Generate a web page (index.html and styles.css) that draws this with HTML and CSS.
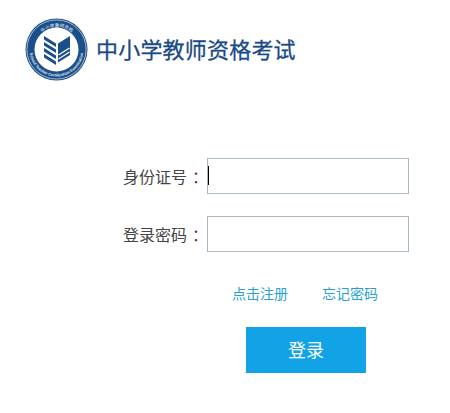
FILE: index.html
```html
<!DOCTYPE html>
<html lang="zh-CN">
<head>
<meta charset="utf-8">
<title>中小学教师资格考试</title>
<link rel="stylesheet" href="styles.css">
</head>
<body>
<header class="brand">
  <svg class="logo" viewBox="0 0 63 63" aria-hidden="true">
    <defs>
      <path id="ring-top" d="M9.5 31.5 A22.5 22.5 0 0 1 54.5 31.5"/>
      <path id="ring-bottom" d="M4.5 31.5 A27 27 0 0 0 58.5 31.5"/>
    </defs>
    <circle cx="31.5" cy="31.5" r="31" fill="#1a4f8a"/>
    <circle cx="31.5" cy="31.5" r="29.6" fill="none" stroke="#dfe8f2" stroke-width="0.7"/>
    <circle cx="31.5" cy="31.5" r="22" fill="#fff"/>
    <text class="ring-cn"><textPath href="#ring-top" startOffset="50%" text-anchor="middle">中小学教师资格</textPath></text>
    <text class="ring-en"><textPath href="#ring-bottom" startOffset="50%" text-anchor="middle">School Teacher Certification Examination</textPath></text>
    <path d="M19 18 L31 25.5 V29 L19 21.5 Z M19 24 L31 31.5 V35 L19 27.5 Z M19 30 L31 37.5 V41 L19 33.5 Z M19 36 L31 43.5 V47 L19 39.5 Z" fill="#1a4f8a"/>
    <path d="M33 25.5 L45 18 V37 L33 44.5 Z" fill="#1a4f8a"/>
    <path d="M33.5 37 L44.5 30 M33.5 41 L44.5 34" stroke="#fff" stroke-width="1.2"/>
  </svg>
  <h1 class="title">中小学教师资格考试</h1>
</header>
<main>
  <form class="login">
    <div class="field">
      <label class="label" for="id">身份证号<span class="colon">：</span></label>
      <div class="control">
        <input class="input" id="id" type="text">
        <span class="caret"></span>
      </div>
    </div>
    <div class="field">
      <label class="label" for="pw">登录密码<span class="colon">：</span></label>
      <div class="control">
        <input class="input" id="pw" type="password">
      </div>
    </div>
    <div class="links">
      <a class="link" href="#">点击注册</a>
      <a class="link" href="#">忘记密码</a>
    </div>
    <button class="submit" type="button">登录</button>
  </form>
</main>
</body>
</html>
```
FILE: styles.css
```css
* { box-sizing: border-box; }
html, body { margin: 0; background: #fff; }
body {
  font-family: "Noto Sans CJK SC", "Liberation Sans", sans-serif;
  color: #333;
}
.brand {
  display: flex;
  align-items: center;
  gap: 9px;
  height: 98px;
  padding-left: 25px;
}
.logo { width: 63px; height: 63px; flex: none; }
.ring-cn { font-size: 4.6px; fill: #e6edf5; }
.ring-en { font-size: 3.9px; fill: #e6edf5; font-family: "Liberation Sans", sans-serif; font-weight: 700; }
.title {
  margin: 0 0 3px -1px;
  font-size: 22px;
  font-weight: 400;
  line-height: 30px;
  letter-spacing: 0.2px;
  color: #1b4a84;
  -webkit-text-stroke: 0.3px #1b4a84;
}
.login {
  display: flex;
  flex-direction: column;
  padding-top: 60px;
}
.field {
  display: flex;
  align-items: center;
  height: 36px;
  margin-bottom: 22px;
  padding-left: 123px;
}
.label {
  width: 84px;
  font-size: 16px;
  line-height: 36px;
  color: #444;
  white-space: nowrap;
}
.colon { padding-left: 5px; }
.control { position: relative; }
.input {
  display: block;
  width: 202px;
  height: 36px;
  padding: 0 0 0 1px;
  border: 1px solid #a9b8c6;
  border-radius: 0;
  outline: none;
  background: #fff;
  font-size: 16px;
}
.caret {
  position: absolute;
  left: 1px;
  top: 8px;
  width: 1px;
  height: 19px;
  background: #000;
}
.links {
  display: flex;
  gap: 34px;
  padding-left: 232px;
  margin-top: 8px;
}
.link {
  width: 56px;
  font-size: 14px;
  line-height: 22px;
  color: #2a9fd3;
  text-decoration: none;
  white-space: nowrap;
}
.submit {
  align-self: flex-start;
  width: 120px;
  height: 46px;
  margin: 23px 0 0 246px;
  border: 0;
  padding: 0 0 2px;
  background: #11a3e6;
  color: #fff;
  font-family: inherit;
  font-size: 18px;
}
```
